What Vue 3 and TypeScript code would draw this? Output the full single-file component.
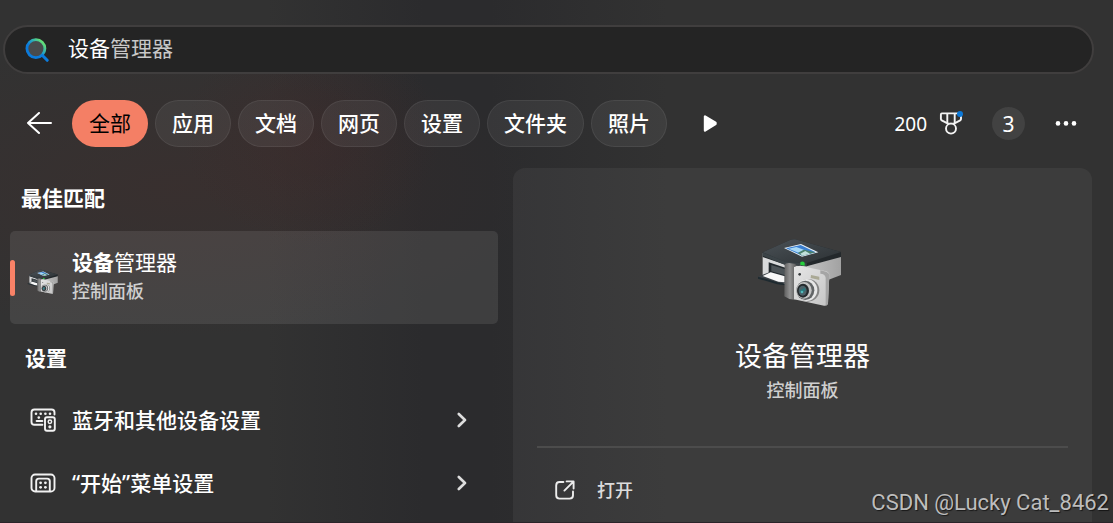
<script setup lang="ts">
import { ref } from 'vue'

interface Filter {
  id: string
  label: string
}

interface SettingItem {
  id: string
  label: string
  icon: 'devices' | 'start'
}

const query = ref('设备')
const completion = '管理器'
const points = 200
const activeFilter = ref('all')

const filters: Filter[] = [
  { id: 'all', label: '全部' },
  { id: 'apps', label: '应用' },
  { id: 'documents', label: '文档' },
  { id: 'web', label: '网页' },
  { id: 'settings', label: '设置' },
  { id: 'folders', label: '文件夹' },
  { id: 'photos', label: '照片' },
]

const settings: SettingItem[] = [
  { id: 'bluetooth', label: '蓝牙和其他设备设置', icon: 'devices' },
  { id: 'start', label: '“开始”菜单设置', icon: 'start' },
]
</script>

<template>
  <div class="page">
    <svg class="defs" aria-hidden="true">
      <defs>
        <linearGradient id="top" x1="0" y1="0" x2="1" y2="1">
          <stop offset="0" stop-color="#4b5257" />
          <stop offset="1" stop-color="#2c3134" />
        </linearGradient>
        <linearGradient id="side" x1="0" y1="0" x2="1" y2="0">
          <stop offset="0" stop-color="#d6d6d6" />
          <stop offset="1" stop-color="#a2a2a2" />
        </linearGradient>
        <linearGradient id="grip" x1="0" y1="0" x2="1" y2="0">
          <stop offset="0" stop-color="#606060" />
          <stop offset="0.5" stop-color="#929292" />
          <stop offset="1" stop-color="#5d5d5d" />
        </linearGradient>
        <linearGradient id="body" x1="0" y1="0" x2="1" y2="1">
          <stop offset="0" stop-color="#e6e6e6" />
          <stop offset="1" stop-color="#c4c4c4" />
        </linearGradient>
        <symbol id="printer" viewBox="18 24 282 208">
          <path d="M38 68L106 92V160L38 140Z" fill="#d9dadb" />
          <path d="M106 102L273 76V134L236 148L106 160Z" fill="url(#side)" />
          <path d="M38 66L122 28Q128 26 136 27L273 65V80L170 108L106 103L38 80Z" fill="#23282b" />
          <path d="M38 66L122 28Q128 26 136 27L273 65L170 98L106 95Z" fill="url(#top)" />
          <path d="M38 66L106 94L170 98V108L106 104L38 76Z" fill="#3b4347" />
          <path d="M102 53L153 41L205 66L156 79Z" fill="#e8f0f6" />
          <path d="M108 54L152 44L197 66L157 76Z" fill="#397ed0" />
          <path d="M116 55L139 50L165 60L145 67Z" fill="#a7d9f7" />
          <path d="M143 68L161 58L197 66L157 76Z" fill="#4c826e" />
          <path d="M151 70L166 62L180 70L157 76Z" fill="#c1e0dc" />
          <path d="M56 96L106 112V145L56 128Z" fill="#22292d" />
          <path d="M64 104L106 117V135L64 123Z" fill="#4d5458" />
          <path d="M24 139L60 125L106 137V159L87 157Z" fill="#394046" />
          <path d="M38 137L62 126L104 138V156L85 154Z" fill="#f8f8f8" />
          <path d="M24 139L86 157L106 160V165L82 162L24 145Z" fill="#1e2a30" />
          <path d="M151 104V96Q158 91 164 97V106Z" fill="#25cf3c" />
          <path d="M104 105Q105 98 117 98L137 101V209L118 206L103 198Z" fill="url(#grip)" />
          <path d="M132 110L151 106L228 123Q238 126 238 134L234 219Q233 227 222 226L132 207Z" fill="url(#body)" />
          <path d="M211 130Q225 130 227 142V225Q233 226 234 219L238 134Q237 127 228 124L211 120Z" fill="#a5a5a5" />
          <path d="M183 134L208 139V149L182 143Z" fill="#aaa995" />
          <circle cx="149" cy="132" r="4" fill="#35393b" />
          <ellipse cx="174" cy="180" rx="34" ry="34" fill="#858585" />
          <ellipse cx="170" cy="179" rx="32" ry="33" fill="#e7e7e7" />
          <ellipse cx="166" cy="180" rx="27" ry="29" fill="#616466" />
          <ellipse cx="162" cy="180" rx="23" ry="25" fill="#c5c5c5" />
          <ellipse cx="159" cy="181" rx="18" ry="21" fill="#252a2d" />
          <ellipse cx="158" cy="181" rx="12" ry="15" fill="#4e6269" />
          <path d="M149 181L164 172L167 179L155 190Z" fill="#27777c" />
          <circle cx="156" cy="185" r="4" fill="#52b8ba" />
        </symbol>
      </defs>
    </svg>

    <label class="search">
      <svg class="search-icon" viewBox="0 0 24 24" aria-hidden="true">
        <defs>
          <linearGradient id="ring" x1="0" y1="1" x2="1" y2="0">
            <stop offset="0.4" stop-color="#0b7bdc" />
            <stop offset="0.6" stop-color="#27a8c0" />
            <stop offset="0.85" stop-color="#62dd78" />
          </linearGradient>
        </defs>
        <circle cx="10.9" cy="10.6" r="9" fill="#484b4d" stroke="url(#ring)" stroke-width="2.8" />
        <path d="M17.5 17.5L22.2 22.3" stroke="#0b7bdc" stroke-width="3" stroke-linecap="round" />
      </svg>
      <input v-model="query" class="search-input" type="text" aria-label="搜索" />
      <span class="completion">{{ completion }}</span>
    </label>

    <nav class="toolbar">
      <button class="icon-button back" type="button" aria-label="返回">
        <svg viewBox="0 0 26 24" aria-hidden="true">
          <path d="M13 1L2 11L13 21M2 11H25" fill="none" stroke="#fff" stroke-width="2" stroke-linecap="round" stroke-linejoin="round" />
        </svg>
      </button>
      <div class="filters">
        <button
          v-for="filter in filters"
          :key="filter.id"
          class="pill"
          :class="{ active: activeFilter === filter.id }"
          type="button"
          @click="activeFilter = filter.id"
        >{{ filter.label }}</button>
      </div>
      <button class="icon-button next" type="button" aria-label="更多筛选">
        <svg viewBox="0 0 14 18" aria-hidden="true">
          <path d="M2 1.5V15.5L12.5 9.1V7.7Z" fill="#fff" stroke="#fff" stroke-width="2.4" stroke-linejoin="round" />
        </svg>
      </button>
      <div class="account">
        <button class="rewards" type="button">
          <span>{{ points }}</span>
          <svg viewBox="0 0 24 26" aria-hidden="true">
            <g fill="none" stroke="#f4f4f4" stroke-width="1.9" stroke-linejoin="round">
              <path d="M1.9 3.4Q1.9 2.4 2.9 2.4H21Q22 2.4 22 3.4V8Q22 8.9 21.2 9.3L15 12.6H9L2.7 9.3Q1.9 8.9 1.9 8Z" />
              <path d="M8.3 2.4V12M15.7 2.4V12" />
              <circle cx="12" cy="17.6" r="5" fill="#323232" />
            </g>
            <circle cx="21" cy="3" r="3" fill="#0b78d8" />
          </svg>
        </button>
        <button class="avatar" type="button">3</button>
        <button class="icon-button more" type="button" aria-label="选项">
          <svg viewBox="0 0 22 6" aria-hidden="true">
            <circle cx="3" cy="2.4" r="2.3" fill="#fff" />
            <circle cx="11" cy="2.4" r="2.3" fill="#fff" />
            <circle cx="19" cy="2.4" r="2.3" fill="#fff" />
          </svg>
        </button>
      </div>
    </nav>

    <main class="content">
      <section class="results">
        <h2 class="heading">最佳匹配</h2>
        <button class="best" type="button">
          <svg class="best-icon" aria-hidden="true"><use href="#printer" /></svg>
          <span class="best-text">
            <span class="best-title"><b>设备</b>管理器</span>
            <span class="sub">控制面板</span>
          </span>
        </button>
        <h2 class="heading group">设置</h2>
        <button v-for="item in settings" :key="item.id" class="row" type="button">
          <svg v-if="item.icon === 'devices'" class="row-icon" viewBox="0 0 26 26" aria-hidden="true">
            <g fill="none" stroke="#f2f2f2" stroke-width="1.9" stroke-linecap="round" stroke-linejoin="round">
              <path d="M12.4 17.8H4.4Q1.5 17.8 1.5 14.9V5.4Q1.5 2.5 4.4 2.5H21.6Q24.5 2.5 24.5 5.4V7.6" />
              <path d="M6.6 14H12.4" />
              <rect x="15" y="10.2" width="9.8" height="13.6" rx="2" />
            </g>
            <g fill="#f2f2f2">
              <circle cx="6" cy="6.7" r="1.3" />
              <circle cx="10.7" cy="6.7" r="1.3" />
              <circle cx="15.4" cy="6.7" r="1.3" />
              <circle cx="20" cy="6.7" r="1.3" />
              <circle cx="8.8" cy="10.6" r="1.3" />
              <circle cx="19.9" cy="19.8" r="1.6" />
            </g>
            <circle cx="19.9" cy="14.8" r="1.7" fill="none" stroke="#f2f2f2" stroke-width="1.5" />
          </svg>
          <svg v-else class="row-icon" viewBox="0 0 26 26" aria-hidden="true">
            <g fill="none" stroke="#f2f2f2" stroke-width="1.9" stroke-linejoin="round">
              <rect x="1.5" y="4.5" width="23" height="17" rx="3.6" />
              <path d="M6.2 21V11.2Q6.2 8.6 8.8 8.6H17.2Q19.8 8.6 19.8 11.2V21" />
            </g>
            <g fill="#f2f2f2">
              <circle cx="10.6" cy="12.8" r="1.4" />
              <circle cx="15.4" cy="12.8" r="1.4" />
              <circle cx="10.6" cy="17.3" r="1.4" />
              <circle cx="15.4" cy="17.3" r="1.4" />
            </g>
          </svg>
          <span class="row-label">{{ item.label }}</span>
          <svg class="chevron" viewBox="0 0 10 16" aria-hidden="true">
            <path d="M1.8 2L8 8L1.8 14" fill="none" stroke="#dedede" stroke-width="2.6" stroke-linecap="round" stroke-linejoin="round" />
          </svg>
        </button>
      </section>

      <section class="panel">
        <svg class="panel-icon" aria-hidden="true"><use href="#printer" /></svg>
        <h1 class="panel-title">设备管理器</h1>
        <p class="sub">控制面板</p>
        <hr class="divider" />
        <button class="open" type="button">
          <svg viewBox="0 0 20 20" aria-hidden="true">
            <path d="M8.4 2H4.6Q1.2 2 1.2 5.4V15.2Q1.2 18.6 4.6 18.6H14.6Q18 18.6 18 15.2V11.4M11.6 1.4H18.6V8.6M18.2 1.8L9.4 10.6" fill="none" stroke="#ededed" stroke-width="1.9" stroke-linecap="round" stroke-linejoin="round" />
          </svg>
          <span>打开</span>
        </button>
      </section>
    </main>

    <div class="watermark">CSDN @Lucky Cat_8462</div>
  </div>
</template>

<style>
body {
  margin: 0;
  background: #323232;
}
</style>

<style scoped>
.page {
  position: relative;
  box-sizing: border-box;
  min-height: 100vh;
  display: flex;
  flex-direction: column;
  padding-top: 25px;
  border-bottom: 1px solid #2b2429;
  color: #fff;
  font-family: "Noto Sans", "Noto Sans CJK SC", sans-serif;
  font-size: 21px;
  font-weight: 500;
  line-height: 30px;
  background:
    radial-gradient(ellipse 130px 110px at 28% 26%, rgba(70, 38, 38, 0.3), transparent),
    radial-gradient(ellipse 360px 150px at 16% 36%, rgba(66, 44, 42, 0.4), transparent),
    linear-gradient(90deg, #323232 0%, #323232 24%, #2b2b2d 38%, #2b2b2d 44%, #323232 60%, #323232 100%);
}

.page * {
  box-sizing: border-box;
}

.defs {
  position: absolute;
  width: 0;
  height: 0;
}

svg {
  flex: none;
  display: block;
}

button {
  margin: 0;
  padding: 0;
  border: 0;
  background: none;
  color: inherit;
  font: inherit;
  text-align: left;
  cursor: pointer;
}

.search {
  display: flex;
  align-items: center;
  height: 49px;
  margin: 0 19px 0 3px;
  padding-left: 20px;
  border: 2px solid #403e3e;
  border-radius: 25px;
  background: #242424;
}

.search-icon {
  width: 24px;
  height: 24px;
  margin-right: 19px;
}

.search-input {
  width: 2em;
  padding: 0 0 3px;
  border: 0;
  outline: 0;
  background: none;
  color: #fff;
  font: inherit;
  font-weight: 400;
}

.completion {
  padding-bottom: 3px;
  color: #c8c8c8;
  font-weight: 400;
}

.toolbar {
  display: flex;
  align-items: center;
  height: 47px;
  margin: 26px 36px 21px 26px;
}

.back svg {
  width: 26px;
  height: 24px;
}

.filters {
  display: flex;
  gap: 7px;
  margin-left: 20px;
}

.pill {
  height: 47px;
  padding: 0 17px 2px;
  border-radius: 24px;
  background: rgba(255, 255, 255, 0.06);
  box-shadow: inset 0 0 0 1px rgba(255, 255, 255, 0.07);
}

.pill.active {
  background: #f47f65;
  box-shadow: none;
  color: #000;
  font-weight: 400;
}

.next {
  margin-left: 36px;
}

.next svg {
  width: 14px;
  height: 18px;
}

.account {
  display: flex;
  align-items: center;
  margin-left: auto;
  font-weight: 400;
}

.rewards {
  display: flex;
  align-items: center;
  gap: 12px;
  font-size: 19px;
}

.rewards svg {
  width: 24px;
  height: 26px;
}

.avatar {
  width: 33px;
  height: 33px;
  margin: 0 30px 0 29px;
  border-radius: 50%;
  background: #424242;
  text-align: center;
}

.more svg {
  width: 22px;
  height: 6px;
}

.content {
  flex: 1;
  display: grid;
  grid-template-columns: 488fr 579fr;
  gap: 15px;
  margin: 0 21px 0 10px;
}

.results {
  display: flex;
  flex-direction: column;
}

.heading {
  margin: 0;
  padding: 15px 0 18px 11px;
  font-size: 21px;
  font-weight: 700;
}

.heading.group {
  padding: 19px 0 16px 15px;
}

.best {
  position: relative;
  display: flex;
  align-items: center;
  height: 93px;
  padding: 0 0 4px 17px;
  border-radius: 5px;
  background: rgba(255, 255, 255, 0.09);
}

.best::before {
  content: "";
  position: absolute;
  left: 0;
  top: 29px;
  bottom: 28px;
  width: 5px;
  border-radius: 3px;
  background: #f98267;
}

.best-icon {
  width: 34px;
  height: 26px;
  margin: 12px 11px 0 0;
}

.best-text,
.best-title {
  display: block;
}

.best-title {
  font-weight: 400;
}

.best-text .sub {
  display: block;
}

.sub {
  margin: 0;
  color: #cfcfcf;
  font-size: 18px;
  line-height: 28px;
}

.row {
  display: flex;
  align-items: center;
  height: 63px;
  padding: 0 31px 2px 20px;
}

.row-icon {
  width: 26px;
  height: 26px;
  margin-right: 16px;
}

.row-label {
  flex: 1;
}

.chevron {
  width: 10px;
  height: 16px;
}

.panel {
  display: flex;
  flex-direction: column;
  align-items: center;
  padding: 70px 24px 0;
  border-radius: 12px 12px 0 0;
  background: rgba(255, 255, 255, 0.05);
}

.panel-icon {
  width: 94px;
  height: 70px;
}

.panel-title {
  margin: 28px 0 0;
  font-size: 27px;
  font-weight: 400;
  line-height: 40px;
}

.divider {
  align-self: stretch;
  height: 2px;
  margin: 42px 0 0;
  border: 0;
  background: #4c4c4c;
}

.open {
  align-self: stretch;
  display: flex;
  align-items: center;
  gap: 22px;
  margin-top: 27px;
  padding-left: 18px;
  color: #dcdcdc;
  font-size: 18px;
}

.open svg {
  width: 20px;
  height: 20px;
}

.watermark {
  position: absolute;
  right: 4px;
  bottom: 4px;
  color: #bdbdbd;
  font-family: Roboto, "Liberation Sans", sans-serif;
  font-size: 22px;
  font-weight: 400;
  text-shadow: 1px 1px 1px rgba(0, 0, 0, 0.6);
}
</style>
